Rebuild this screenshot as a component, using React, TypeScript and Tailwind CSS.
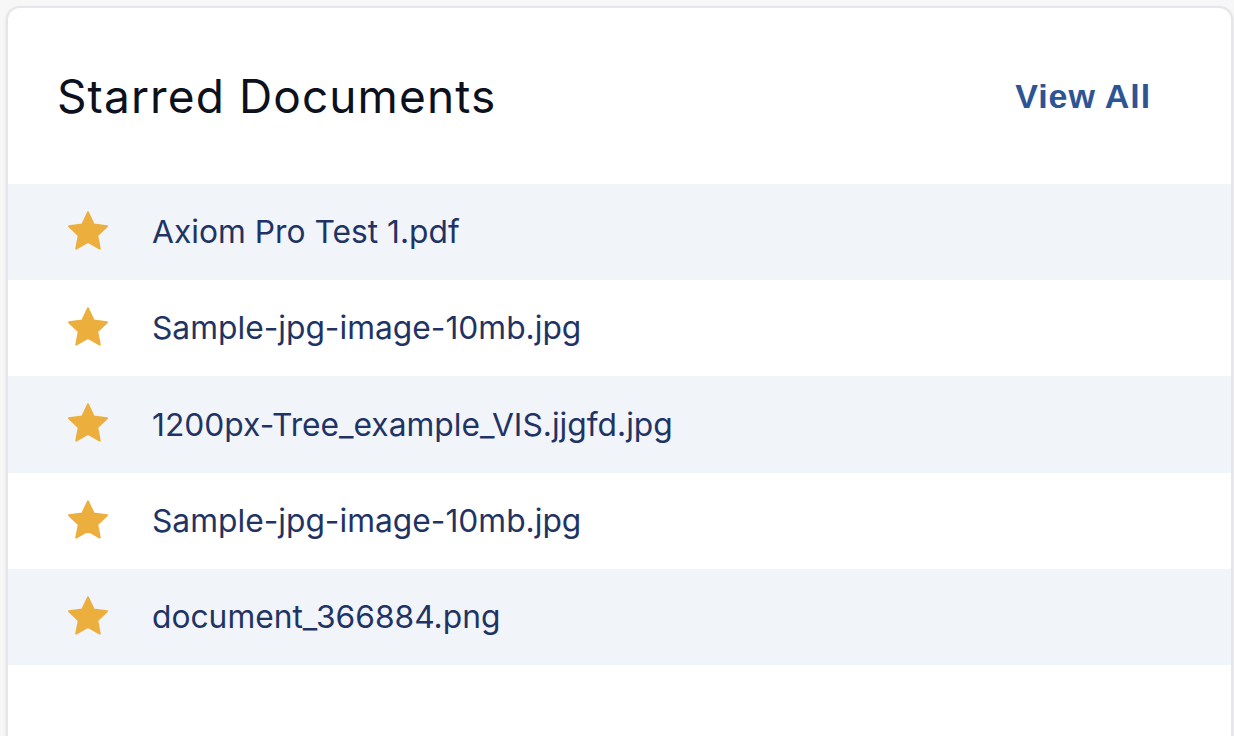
const docs = [
  "Axiom Pro Test 1.pdf",
  "Sample-jpg-image-10mb.jpg",
  "1200px-Tree_example_VIS.jjgfd.jpg",
  "Sample-jpg-image-10mb.jpg",
  "document_366884.png",
];

const Star = () => (
  <svg viewBox="0 0 24 24" className="h-[48px] w-[48px] shrink-0" aria-hidden>
    <path
      d="M12 2.2l2.9 6.1 6.6.8-4.9 4.6 1.3 6.6L12 17l-5.9 3.3 1.3-6.6-4.9-4.6 6.6-.8z"
      fill="#ecae3d"
      stroke="#ecae3d"
      strokeWidth="1"
      strokeLinejoin="round"
    />
  </svg>
);

export default function App() {
  return (
    <div className="min-h-screen bg-[#f7f7f8] pl-[6px] pr-[1px] pt-[6px] font-['Inter',sans-serif]">
      <div className="h-[760px] overflow-hidden rounded-t-[14px] border-2 border-[#e6e6ea] bg-white shadow-sm">
        <div className="flex h-[176px] items-center justify-between pl-[49px] pr-[80px]">
          <h2 className="text-[46px] font-normal tracking-[1.1px] text-[#0c111d]">Starred Documents</h2>
          <a className="font-['Liberation_Sans',sans-serif] text-[34px] font-bold tracking-[0.9px] text-[#2d5494]">
            View All
          </a>
        </div>
        <ul>
          {docs.map((name, i) => (
            <li
              key={`${name}.${i}`}
              className={`flex h-[96.2px] items-center pl-[56px] ${i % 2 === 0 ? "bg-[#f1f4f9]" : "bg-white"}`}
            >
              <Star />
              <span className="ml-[40px] text-[31.75px] text-[#1f3464]">{name}</span>
            </li>
          ))}
        </ul>
      </div>
    </div>
  );
}
